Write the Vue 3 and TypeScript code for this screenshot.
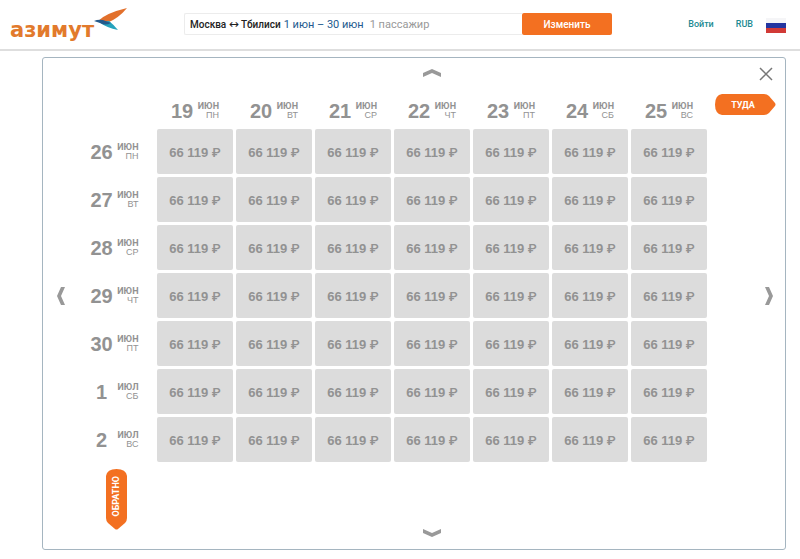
<script setup lang="ts">
import { ref } from 'vue'

interface Day {
  day: number
  month: string
  weekday: string
}

const outbound: Day[] = [
  { day: 19, month: 'ИЮН', weekday: 'ПН' },
  { day: 20, month: 'ИЮН', weekday: 'ВТ' },
  { day: 21, month: 'ИЮН', weekday: 'СР' },
  { day: 22, month: 'ИЮН', weekday: 'ЧТ' },
  { day: 23, month: 'ИЮН', weekday: 'ПТ' },
  { day: 24, month: 'ИЮН', weekday: 'СБ' },
  { day: 25, month: 'ИЮН', weekday: 'ВС' },
]

const inbound: Day[] = [
  { day: 26, month: 'ИЮН', weekday: 'ПН' },
  { day: 27, month: 'ИЮН', weekday: 'ВТ' },
  { day: 28, month: 'ИЮН', weekday: 'СР' },
  { day: 29, month: 'ИЮН', weekday: 'ЧТ' },
  { day: 30, month: 'ИЮН', weekday: 'ПТ' },
  { day: 1, month: 'ИЮЛ', weekday: 'СБ' },
  { day: 2, month: 'ИЮЛ', weekday: 'ВС' },
]

const price = ref('66 119')
</script>

<template>
  <header class="header">
    <a class="logo" href="#">
      <span class="logo-name">азимут</span>
      <svg class="logo-bird" viewBox="0 0 34 24" aria-hidden="true">
        <path d="M4 13Q12 5 33 0Q25 10 13 15Z" fill="#e2702c" />
        <path d="M5 14L15 13Q20 17 24 22Q13 20 5 14Z" fill="#25a3bd" />
        <path d="M0 13Q4 11 9 12L17 15Q11 18 6 15Q3 14 0 13Z" fill="#245a8c" />
      </svg>
    </a>
    <form class="search" @submit.prevent>
      <button class="summary" type="button">
        <span class="cities">Москва <span class="arrow">↔</span> Тбилиси</span>
        <span class="dates">1 июн – 30 июн</span>
        <span class="people">1 пассажир</span>
      </button>
      <button class="change" type="submit">Изменить</button>
    </form>
    <nav class="menu">
      <a href="#">Войти</a>
      <a href="#">RUB</a>
      <button class="flag" type="button" aria-label="Русский">
        <svg viewBox="0 0 20 15" aria-hidden="true">
          <rect width="20" height="5" fill="#f5f5f7" />
          <rect y="5" width="20" height="5" fill="#2335a0" />
          <rect y="10" width="20" height="5" fill="#d13a36" />
        </svg>
      </button>
    </nav>
  </header>

  <main class="panel">
    <button class="icon up" type="button" aria-label="Раньше обратно">
      <svg width="18" height="8" viewBox="0 0 18 8"><path d="M0 4L9 0L18 4V8L9 4L0 8Z" /></svg>
    </button>
    <button class="icon close" type="button" aria-label="Закрыть">
      <svg width="14" height="14" viewBox="0 0 14 14"><path class="line" d="M1 1L13 13M13 1L1 13" /></svg>
    </button>
    <button class="icon left" type="button" aria-label="Раньше туда">
      <svg width="8" height="18" viewBox="0 0 8 18"><path d="M4 0H8L4 9L8 18H4L0 9Z" /></svg>
    </button>

    <table class="prices">
      <thead>
        <tr>
          <td class="corner"></td>
          <th v-for="d in outbound" :key="d.day" scope="col">
            <span class="date">
              <span class="day">{{ d.day }}</span>
              <span class="label"><b>{{ d.month }}</b><span>{{ d.weekday }}</span></span>
            </span>
          </th>
        </tr>
      </thead>
      <tbody>
        <tr v-for="r in inbound" :key="r.day">
          <th class="row-head" scope="row">
            <span class="date">
              <span class="day">{{ r.day }}</span>
              <span class="label"><b>{{ r.month }}</b><span>{{ r.weekday }}</span></span>
            </span>
          </th>
          <td v-for="d in outbound" :key="d.day">
            <button class="price" type="button">{{ price }} <span class="rub">₽</span></button>
          </td>
        </tr>
      </tbody>
    </table>

    <div class="tag there">
      <svg viewBox="0 0 61 21" aria-hidden="true"><path d="M7 0H49Q52 0 54 2L60 9Q61 10.500 60 12L54 19Q52 21 49 21H7Q0 20 0 10.500Q0 1 7 0Z" /></svg>
      <span>ТУДА</span>
    </div>
    <button class="icon right" type="button" aria-label="Позже туда">
      <svg width="8" height="18" viewBox="0 0 8 18"><path d="M4 0H0L4 9L0 18H4L8 9Z" /></svg>
    </button>
    <div class="tag back">
      <svg viewBox="0 0 21 61" aria-hidden="true"><path d="M0 7V49Q0 52 2 54L9 60Q10.500 61 12 60L19 54Q21 52 21 49V7Q20 0 10.500 0Q1 0 0 7Z" /></svg>
      <span>ОБРАТНО</span>
    </div>
    <button class="icon down" type="button" aria-label="Позже обратно">
      <svg width="18" height="8" viewBox="0 0 18 8"><path d="M0 4L9 8L18 4V0L9 4L0 0Z" /></svg>
    </button>
  </main>
</template>

<style>
body {
  margin: 0;
  background: #fff;
  font-family: "Liberation Sans", Arial, sans-serif;
}
</style>

<style scoped>
button {
  margin: 0;
  padding: 0;
  border: 0;
  background: none;
  font: inherit;
  cursor: pointer;
}

a {
  text-decoration: none;
}

svg {
  display: block;
}

.header {
  display: flex;
  align-items: flex-start;
  height: 49px;
  border-bottom: 2px solid #dedede;
  font-family: Roboto, sans-serif;
}

.logo {
  display: flex;
  flex: none;
  width: 174px;
  padding: 8px 0 0 10px;
  box-sizing: border-box;
  color: #e27a2c;
}

.logo-name {
  padding-top: 8px;
  font: 700 21px/28px "DejaVu Sans", sans-serif;
}

.logo-bird {
  width: 34px;
  height: 24px;
  flex: none;
}

.search {
  display: flex;
  flex: 1;
  height: 22px;
  margin: 13px 0 0 10px;
  max-width: 428px;
}

.summary {
  display: flex;
  flex: 1;
  align-items: center;
  padding: 0 5px;
  border: 1px solid #ececec;
  border-right: 0;
  border-radius: 2px 0 0 2px;
  color: #222;
  font-size: 11px;
  white-space: nowrap;
}

.cities {
  font-size: 10px;
  font-weight: 500;
}

.arrow {
  font-family: "DejaVu Sans", sans-serif;
  font-size: 12px;
  line-height: 10px;
}

.dates {
  margin-left: 3px;
  color: #235a8e;
}

.people {
  margin-left: 6px;
  color: #999;
}

.change {
  width: 90px;
  border-radius: 2px;
  background: #f37021;
  color: #fff;
  font-size: 10px;
  font-weight: 500;
}

.menu {
  display: flex;
  align-items: center;
  height: 22px;
  margin: 13px 14px 0 auto;
  font-size: 9px;
  font-weight: 500;
}

.menu a {
  margin-right: 22px;
  color: #218a92;
}

.menu a + a {
  margin-right: 13px;
}

.flag {
  width: 20px;
  padding-top: 3px;
}

.panel {
  display: grid;
  grid-template-columns: 35px 76px 1fr 75px;
  grid-template-rows: 35px 33px auto 84px;
  margin: 6px 14px 10px 42px;
  border: 1px solid #a5b5c0;
  border-radius: 3px;
}

.icon {
  padding: 4px;
  place-self: center;
  fill: #999;
}

.line {
  fill: none;
  stroke: #777;
  stroke-width: 1.500;
}

.up {
  grid-area: 1 / 3;
  align-self: start;
  margin-top: 7px;
}

.close {
  grid-area: 1 / 4;
  justify-self: end;
  align-self: start;
  margin-top: 5px;
  margin-right: 8px;
}

.left {
  grid-area: 3 / 1;
}

.right {
  grid-area: 3 / 4;
  justify-self: end;
  margin-right: 8px;
}

.down {
  grid-area: 4 / 3;
  align-self: end;
  margin-bottom: 8px;
}

.prices {
  grid-area: 2 / 2 / 4 / 4;
  width: 100%;
  table-layout: fixed;
  border-spacing: 3px;
  color: #929292;
}

.prices th,
.prices td {
  height: 30px;
  padding: 0;
}

.prices .corner {
  width: 73px;
}

.prices tbody th,
.prices tbody td {
  height: 45px;
}

.date {
  display: flex;
  align-items: center;
  justify-content: center;
  gap: 5px;
}

.row-head .date {
  padding-right: 6px;
}

.day {
  width: 22px;
  font-size: 20px;
  line-height: 24px;
}

.label {
  display: flex;
  flex-direction: column;
  width: 21px;
  align-items: flex-end;
  font-size: 9px;
  font-weight: 400;
  line-height: 9px;
}

.label b {
  font-family: Roboto, sans-serif;
}

.price {
  display: block;
  width: 100%;
  height: 45px;
  padding-top: 2px;
  border-radius: 2px;
  background: #dcdcdc;
  color: #929292;
  font-size: 13px;
  font-weight: 700;
  white-space: nowrap;
}

.rub {
  font-family: Roboto, sans-serif;
  font-size: 13px;
  font-weight: 500;
}

.tag {
  display: grid;
  place-items: center;
  align-self: start;
  color: #fff;
  font: 700 9px/12px Roboto, sans-serif;
  fill: #f37021;
}

.tag > * {
  grid-area: 1 / 1;
}

.there {
  grid-area: 2 / 4;
  width: 61px;
  margin: 1px 0 0 5px;
}

.there svg {
  width: 61px;
}

.there span {
  padding-right: 5px;
}

.back {
  grid-area: 4 / 2;
  justify-self: center;
  width: 21px;
  margin-top: 4px;
}

.back svg {
  width: 21px;
}

.back span {
  padding-bottom: 6px;
  writing-mode: sideways-lr;
}
</style>
